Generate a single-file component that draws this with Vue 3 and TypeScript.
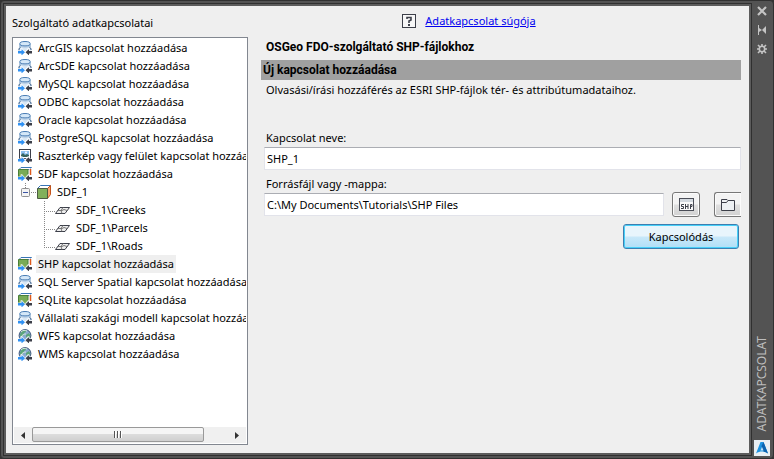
<script setup lang="ts">
import { ref } from 'vue'

type IconKind = 'db' | 'cube' | 'raster' | 'globe'

interface Provider {
  name: string
  icon: IconKind
  connection?: string
  layers?: string[]
}

const providers: Provider[] = [
  { name: 'ArcGIS kapcsolat hozzáadása', icon: 'db' },
  { name: 'ArcSDE kapcsolat hozzáadása', icon: 'db' },
  { name: 'MySQL kapcsolat hozzáadása', icon: 'db' },
  { name: 'ODBC kapcsolat hozzáadása', icon: 'db' },
  { name: 'Oracle kapcsolat hozzáadása', icon: 'db' },
  { name: 'PostgreSQL kapcsolat hozzáadása', icon: 'db' },
  { name: 'Raszterkép vagy felület kapcsolat hozzáadása', icon: 'raster' },
  {
    name: 'SDF kapcsolat hozzáadása',
    icon: 'cube',
    connection: 'SDF_1',
    layers: ['SDF_1\\Creeks', 'SDF_1\\Parcels', 'SDF_1\\Roads'],
  },
  { name: 'SHP kapcsolat hozzáadása', icon: 'cube' },
  { name: 'SQL Server Spatial kapcsolat hozzáadása', icon: 'db' },
  { name: 'SQLite kapcsolat hozzáadása', icon: 'cube' },
  { name: 'Vállalati szakági modell kapcsolat hozzáadása', icon: 'db' },
  { name: 'WFS kapcsolat hozzáadása', icon: 'globe' },
  { name: 'WMS kapcsolat hozzáadása', icon: 'globe' },
]

const selected = ref('SHP kapcsolat hozzáadása')
const expanded = ref(true)
const connectionName = ref('SHP_1')
const sourcePath = ref('C:\\My Documents\\Tutorials\\SHP Files')
</script>

<template>
  <div class="window">
    <main class="panel">
      <section class="sources">
        <h2 class="sources-title">Szolgáltató adatkapcsolatai</h2>
        <div class="list">
          <ul class="tree">
            <li v-for="p in providers" :key="p.name">
              <div class="row">
                <svg class="icon" width="14" height="14" viewBox="0 0 14 14">
                  <g v-if="p.icon === 'db'">
                    <path d="M1.500 3h11v4l1 3H.5l1-3z" fill="#d9e7f4" />
                    <path d="M2 3v3M12 3v3" stroke="#6f97c2" />
                    <path d="M2 5c2 1.500 8 1.500 10 0" stroke="#a9c6e3" fill="none" />
                    <path d="M1 9.500V7.500L2.500 6.500M13 9V7.500L11.500 6.500" stroke="#2c5583" fill="none" />
                    <ellipse cx="7" cy="2.700" rx="5.200" ry="2.200" fill="#d5e8f8" stroke="#4a7db4" />
                  </g>
                  <g v-else-if="p.icon === 'cube'">
                    <path d="M1 2.500l2-2h10.500l-2 2z" fill="#fff" stroke="#3974b5" />
                    <path d="M10.500 3l2.500-2v7l-2.500 2z" fill="#fff" />
                    <path d="M12.500 2v6" stroke="#dd5a1c" stroke-width="1.500" />
                    <path d="M.5 2.500h9.500v8H.500z" fill="#79ab57" stroke="#4b7f38" />
                  </g>
                  <g v-else-if="p.icon === 'raster'">
                    <rect x="1" y="0" width="12" height="10" fill="#3c3f49" />
                    <path d="M2 1h10v8H2z" fill="#fff" />
                    <path d="M3 2h8v6H3z" fill="#8cc0ee" />
                    <path d="M3 6l2-2 2 2 2-1 2 1v2H3z" fill="#36645e" />
                    <circle cx="8" cy="3.500" r="1" fill="#fff" />
                  </g>
                  <g v-else>
                    <circle cx="7" cy="6.500" r="5.900" fill="#8aa9cf" stroke="#3e5579" />
                    <path d="M2 5c1-3 3-3.500 5-4l1 2-2 1-1 3-3 1zM8 6l3-2 1.500 3-2 3L8 8z" fill="#5ba47a" />
                    <path d="M3 3c2-2 4-2 6-1M3 8c1-2 3-3 5-3" stroke="#d6eadb" fill="none" />
                  </g>
                  <path d="M0 9.500h2.500V7.500L4 7l3 3.500L10 7l1.500.5v2H14V14H0z" fill="#fff" opacity=".8" />
                  <path d="M0 10h3.500V8.500H4L7 11.250 4 14h-.5v-1.500H0z" fill="#2f91f3" />
                  <path d="M14 10h-3V8.500h-.5L7.500 11.250l3 2.750h.5v-1.500h3z" fill="#3c3f49" />
                </svg>
                <button
                  type="button"
                  class="node"
                  :class="{ 'is-selected': selected === p.name }"
                  @click="selected = p.name"
                >{{ p.name }}</button>
              </div>
              <ul v-if="p.connection" class="tree-group">
                <li>
                  <div class="row">
                    <span class="junction">
                      <svg width="19" height="18" viewBox="0 0 19 18" shape-rendering="crispEdges">
                        <path d="M7.500 0v6M13 9.500h6" stroke="#888" stroke-dasharray="1 1" />
                      </svg>
                      <button
                        type="button"
                        class="toggle"
                        :aria-expanded="expanded"
                        :aria-label="p.connection"
                        @click="expanded = !expanded"
                      >
                        <svg width="9" height="9" viewBox="0 0 9 9">
                          <rect x=".5" y=".5" width="8" height="8" rx="1" fill="#f4f4f4" stroke="#919191" />
                          <path d="M2 4.500h5" stroke="#3a55a4" />
                          <path v-if="!expanded" d="M4.500 2v5" stroke="#3a55a4" />
                        </svg>
                      </button>
                    </span>
                    <svg class="icon" width="14" height="14" viewBox="0 0 14 14">
                      <path d="M.5 3.500l3-3h10l-3 3z" fill="#fff" stroke="#3974b5" />
                      <path d="M10.500 3.500l3-3v9l-3 4z" fill="#f9a46c" stroke="#c3541c" />
                      <path d="M.5 3.500h10v10H.5z" fill="#82b05b" stroke="#4d5c43" />
                    </svg>
                    <button type="button" class="node" @click="selected = p.connection">{{ p.connection }}</button>
                  </div>
                  <ul v-if="expanded" class="tree-group">
                    <li v-for="(layer, i) in p.layers" :key="layer" class="row">
                      <svg width="37" height="18" viewBox="0 0 37 18" shape-rendering="crispEdges">
                        <path
                          :d="i === 2 ? 'M26.500 0v11M26 10.500h11' : 'M26.500 0v18M26 10.500h11'"
                          stroke="#888"
                          stroke-dasharray="1 1"
                          fill="none"
                        />
                      </svg>
                      <svg class="icon" width="15" height="14" viewBox="0 0 15 14">
                        <path d="M5 4.500h9.500L10 10.500H.500z" fill="#eee" stroke="#3c3f49" />
                        <path d="M3 7.500h4l2-1 3 1M8 4.500l-2 3 1 3" stroke="#777" fill="none" />
                      </svg>
                      <button type="button" class="node" @click="selected = layer">{{ layer }}</button>
                    </li>
                  </ul>
                </li>
              </ul>
            </li>
          </ul>
          <div class="scrollbar">
            <button type="button" class="scroll-arrow" aria-label="Balra">
              <svg width="4" height="7" viewBox="0 0 4 7"><path d="M4 0v7L0 3.500z" fill="#333" /></svg>
            </button>
            <div class="scroll-track">
              <div class="scroll-thumb">
                <svg width="8" height="7" viewBox="0 0 8 7">
                  <path d="M.5 0v7M3.500 0v7M6.500 0v7" stroke="#555" />
                  <path d="M1.500 0v7M4.500 0v7M7.500 0v7" stroke="#fff" />
                </svg>
              </div>
            </div>
            <button type="button" class="scroll-arrow" aria-label="Jobbra">
              <svg width="4" height="7" viewBox="0 0 4 7"><path d="M0 0v7l4-3.500z" fill="#333" /></svg>
            </button>
          </div>
        </div>
      </section>

      <form class="details" @submit.prevent>
        <div class="help">
          <svg width="14" height="14" viewBox="0 0 14 14">
            <rect x=".5" y=".5" width="13" height="13" fill="#f7f7f7" stroke="#3c3f49" />
            <path d="M5 5V3.500h4V6L7 7v2" stroke="#3c3f49" stroke-width="1.600" fill="none" />
            <path d="M6 10h2v2H6z" fill="#3c3f49" />
          </svg>
          <a href="#sugo">Adatkapcsolat súgója</a>
        </div>
        <h1 class="provider">OSGeo FDO-szolgáltató SHP-fájlokhoz</h1>
        <h2 class="band">Új kapcsolat hozzáadása</h2>
        <p class="description">Olvasási/írási hozzáférés az ESRI SHP-fájlok tér- és attribútumadataihoz.</p>

        <label class="caption" for="connection-name">Kapcsolat neve:</label>
        <input id="connection-name" v-model="connectionName" class="field" type="text" />
        <label class="caption second" for="source-path">Forrásfájl vagy -mappa:</label>
        <div class="source">
          <input id="source-path" v-model="sourcePath" class="field" type="text" />
          <button type="button" class="tool" aria-label="SHP-fájl">
            <svg width="15" height="13" viewBox="0 0 15 13">
              <rect x=".5" y=".5" width="14" height="12" fill="#fafafa" stroke="#4a4d57" />
              <path d="M1 1h13v3H1z" fill="#d4dae0" />
              <path d="M5 6.500H2.500v2h2v2H2M6.500 6v5M9 6v5M6.500 8.500H9M11.500 11V6.500H13v2h-1.500" stroke="#3c3f49" fill="none" />
            </svg>
          </button>
          <button type="button" class="tool folder" aria-label="Mappa">
            <svg width="14" height="12" viewBox="0 0 14 12">
              <path d="M.5 11.500V.5h5.500l1 1h6.500v10zM.5 3.500h5l1.500-2" fill="#edf0f3" stroke="#3c3f49" />
            </svg>
          </button>
        </div>
        <button type="submit" class="connect">Kapcsolódás</button>
      </form>
    </main>

    <aside class="titlebar">
      <button type="button" class="chrome" aria-label="Bezárás">
        <svg width="10" height="10" viewBox="0 0 10 10"><path d="M1 1l8 8M9 1L1 9" stroke="#c4c4c4" stroke-width="2.200" /></svg>
      </button>
      <button type="button" class="chrome" aria-label="Automatikus elrejtés">
        <svg width="10" height="10" viewBox="0 0 10 10"><path d="M1 0h1v10H1zM2 3l3 2-3 2zM9 1v8L5 5z" fill="#c4c4c4" /></svg>
      </button>
      <button type="button" class="chrome" aria-label="Tulajdonságok">
        <svg width="10" height="10" viewBox="0 0 10 10">
          <circle cx="5" cy="5" r="2.700" fill="none" stroke="#c4c4c4" stroke-width="1.600" />
          <path d="M5 0v2.500M5 7.500V10M0 5h2.500M7.500 5H10M1 1l2 2M7 7l2 2M9 1L7 3M3 7L1 9" stroke="#c4c4c4" stroke-width="1.600" />
        </svg>
      </button>
      <span class="title">ADATKAPCSOLAT</span>
      <svg class="logo" width="16" height="16" viewBox="0 0 16 16">
        <rect width="16" height="16" fill="#e9eff3" />
        <path d="M6.500 2h3L14 13.500c-2-1.500-4-2-6-2s-4 .5-6 2z" fill="#1e93e0" />
        <path d="M9.500 2L14 13.500c-1.500-1-3-1.700-4.500-2L7.500 6z" fill="#0d62ae" />
        <path d="M8 7l1.500 3.500h-3z" fill="#bfe2f7" />
      </svg>
    </aside>
  </div>
</template>

<style>
body {
  margin: 0;
  background: #333;
}
</style>

<style scoped>
* {
  box-sizing: border-box;
}

.window {
  display: flex;
  min-height: 100vh;
  padding: 2px 1px 2px 2px;
  border: 1px solid #303030;
  border-radius: 4px;
  background: #535353;
  color: #000;
  font-family: 'Noto Sans', 'Open Sans', sans-serif;
  font-size: 11px;
  line-height: 18px;
}

h1,
h2,
p,
ul {
  margin: 0;
  padding: 0;
}

ul {
  list-style: none;
}

button,
input {
  margin: 0;
  padding: 0;
  color: inherit;
  font: inherit;
}

svg {
  display: block;
  flex: none;
}

.panel {
  display: flex;
  flex: 1;
  min-width: 0;
  gap: 13px;
  padding: 8px 8px 8px 6px;
  border: 3px solid #5c5c5c;
  background: #efefef;
  box-shadow: inset 0 0 0 0 #efefef;
  outline: 1px solid #303030;
  outline-offset: -1px;
}

.sources {
  display: flex;
  flex: 0 0 236px;
  flex-direction: column;
  min-width: 0;
}

.sources-title {
  height: 23px;
  font-size: 11px;
  font-weight: 400;
}

.list {
  display: flex;
  flex: 1;
  flex-direction: column;
  justify-content: space-between;
  padding: 1px;
  border: 1px solid #828790;
  background: #fff;
}

.tree {
  padding-left: 4px;
  overflow: hidden;
}

.row {
  display: flex;
  align-items: center;
  height: 18px;
}

.icon {
  margin-right: 4px;
}

.node {
  height: 18px;
  padding: 0 2px;
  border: 0;
  background: none;
  line-height: 18px;
  white-space: nowrap;
}

.node.is-selected {
  background: #efefef;
}

.junction {
  position: relative;
}

.toggle {
  position: absolute;
  top: 5px;
  left: 3px;
  border: 0;
  background: none;
}

.scrollbar {
  display: flex;
  height: 16px;
  background: #f0f0f0;
}

.scroll-arrow {
  display: flex;
  flex: 0 0 18px;
  align-items: center;
  justify-content: center;
  border: 0;
  background: none;
}

.scroll-track {
  flex: 1;
}

.scroll-thumb {
  display: flex;
  align-items: center;
  justify-content: center;
  width: 88%;
  height: 15px;
  border: 1px solid #999;
  border-radius: 2px;
  background: linear-gradient(#f5f5f5 0 45%, #dcdcdc 50%, #cfcfcf);
}

.details {
  display: flex;
  flex: 1;
  flex-direction: column;
  min-width: 0;
}

.help {
  display: flex;
  align-items: center;
  justify-content: center;
  gap: 9px;
  height: 14px;
  margin-right: 64px;
}

.help a {
  color: #0000f0;
}

.provider {
  margin: 10px 0 4px;
  padding-left: 5px;
  font: bold 12px/18px Roboto, sans-serif;
}

.band {
  height: 20px;
  padding-left: 2px;
  background: #a0a0a0;
  font: bold 12px/20px Roboto, sans-serif;
}

.description {
  margin: 1px 0 30px;
  padding-left: 5px;
}

.caption {
  height: 18px;
  padding-left: 5px;
}

.caption.second {
  margin-top: 5px;
}

.field {
  flex: 1;
  min-width: 0;
  min-height: 23px;
  max-height: 23px;
  margin-left: 3px;
  padding: 0 2px;
  border: 1px solid #e2e3ea;
  border-top-color: #abadb3;
  background: #fff;
}

.source {
  display: flex;
  align-items: center;
  height: 23px;
}

.tool {
  display: flex;
  flex: 0 0 28px;
  align-items: center;
  justify-content: center;
  height: 25px;
  margin-left: 8px;
  border: 1px solid #777;
  border-radius: 3px;
  background: linear-gradient(#f3f3f3 0 48%, #dfdfdf 52%, #d2d2d2);
  box-shadow: inset 0 0 0 1px #fbfbfb;
}

.tool.folder {
  flex-basis: 27px;
  margin-left: 14px;
  border-right: 0;
  border-radius: 3px 0 0 3px;
}

.connect {
  align-self: flex-end;
  width: 116px;
  height: 25px;
  margin: 8px 2px 0 0;
  border: 1px solid #3c7fb1;
  border-radius: 3px;
  background: linear-gradient(#e8f5fc 0 48%, #c8e8f9 52%, #b0dff7);
  box-shadow: inset 0 0 0 1px #48d0f8;
}

.titlebar {
  display: flex;
  flex: 0 0 20px;
  flex-direction: column;
  align-items: center;
  padding-top: 3px;
}

.chrome {
  display: flex;
  height: 19px;
  padding: 0;
  border: 0;
  background: none;
}

.title {
  margin-top: auto;
  margin-bottom: 9px;
  color: #bdbdbd;
  font-size: 12px;
  line-height: 16px;
  writing-mode: vertical-rl;
  transform: rotate(180deg);
}
</style>
